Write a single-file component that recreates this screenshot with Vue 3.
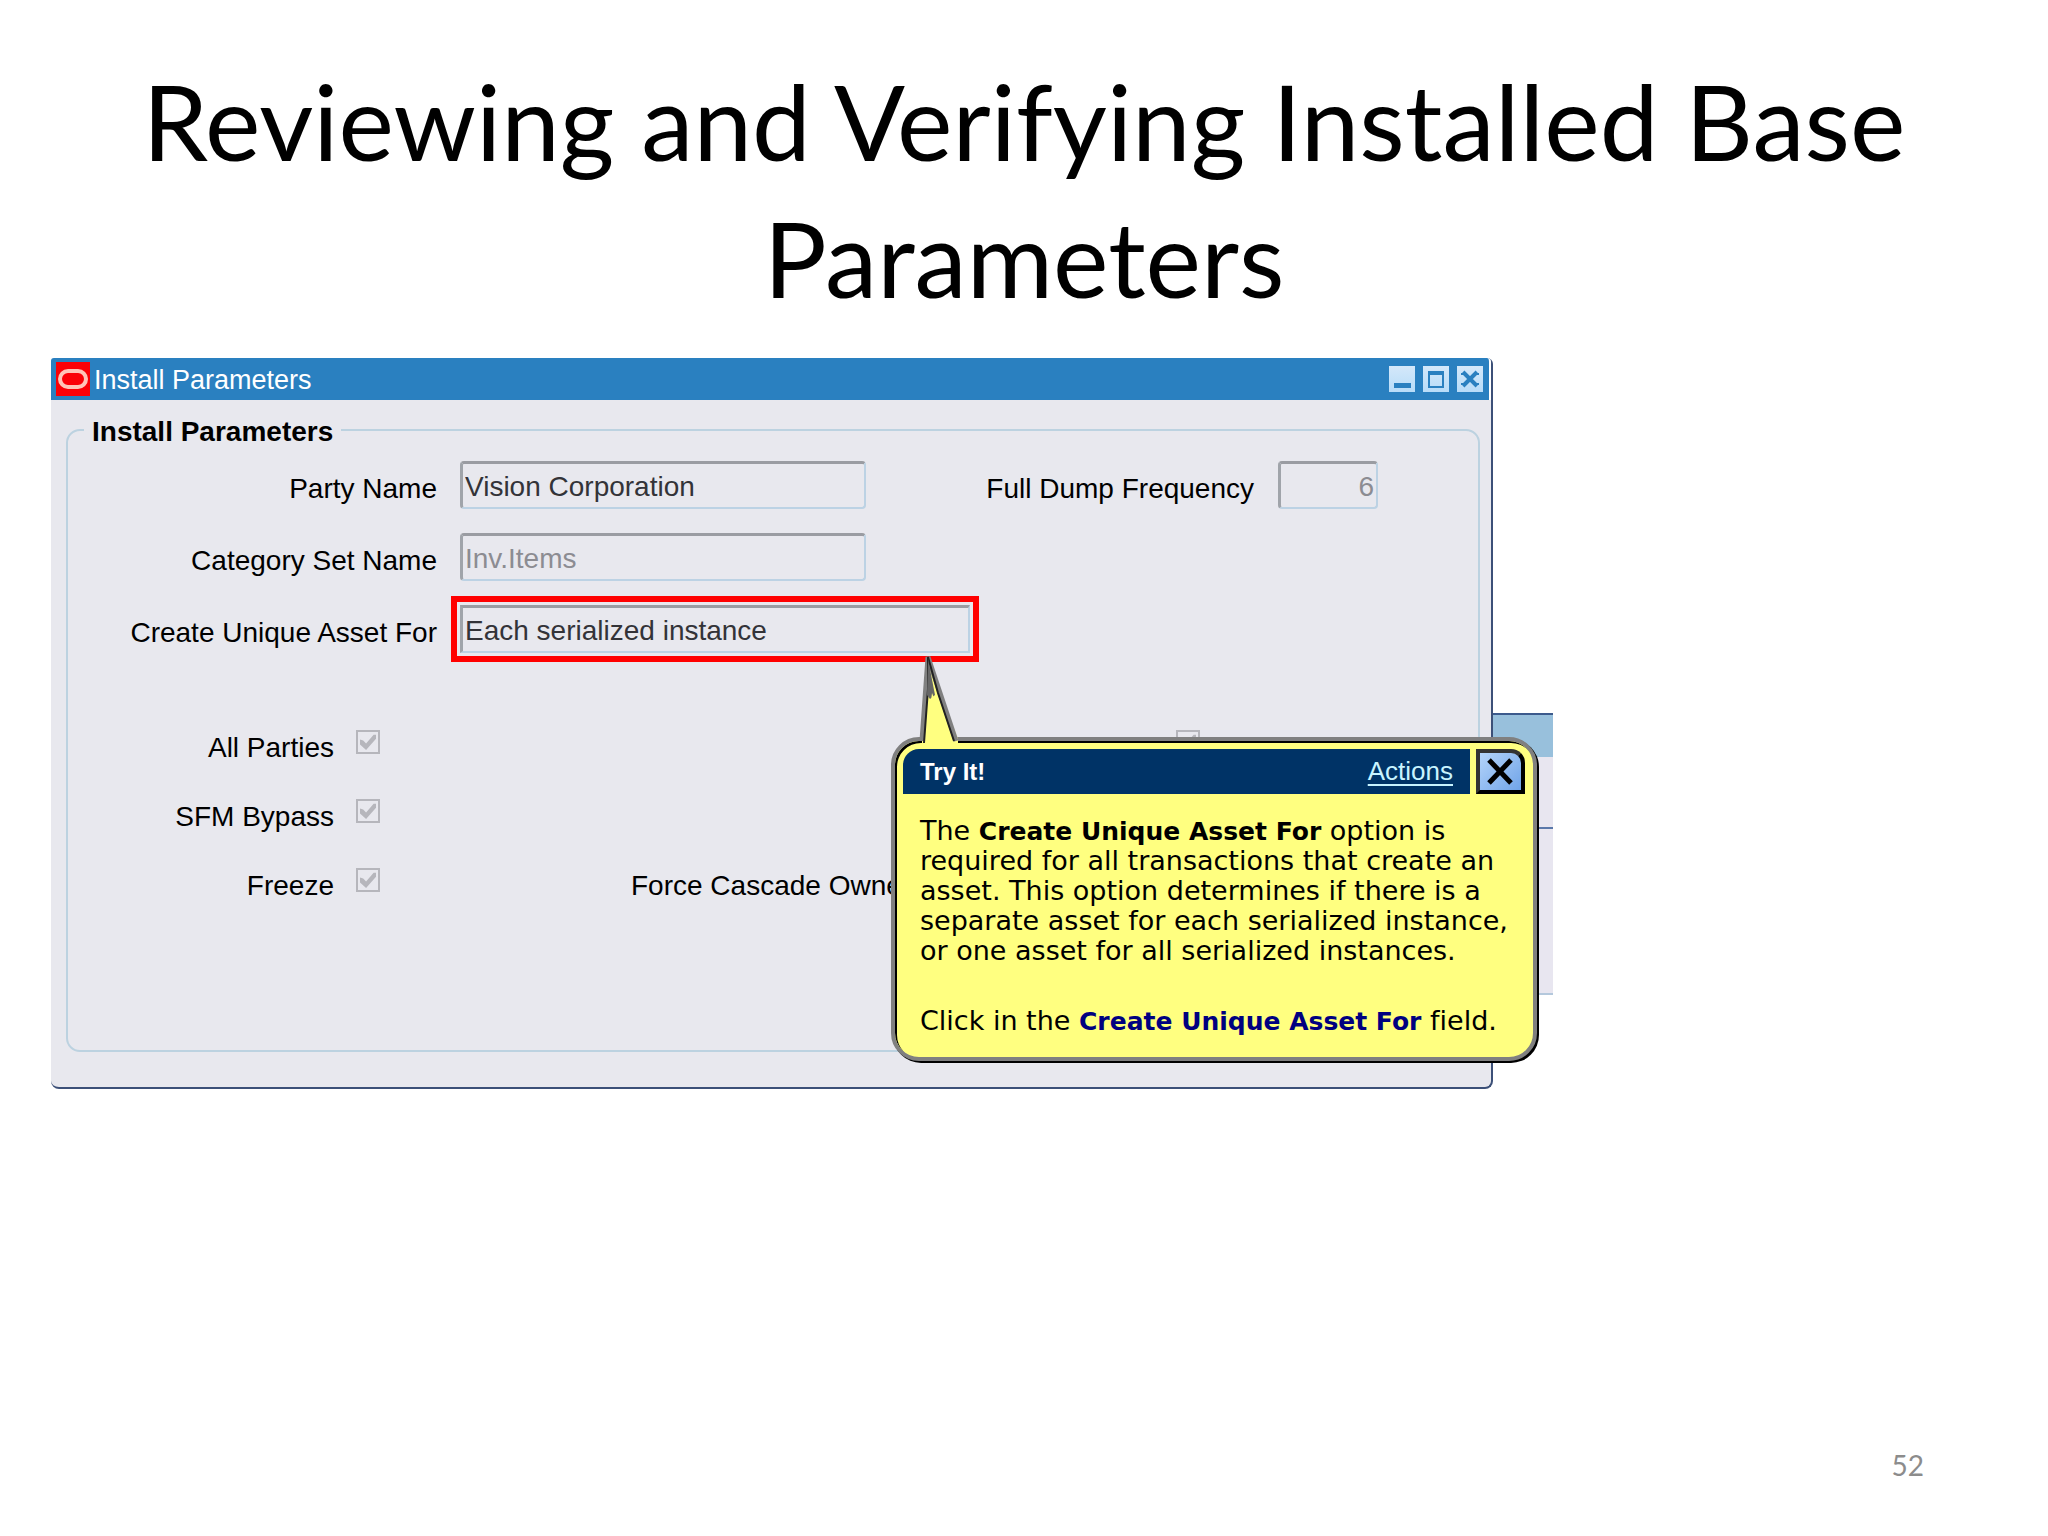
<script setup>
import { ref } from 'vue'

const partyName = ref('Vision Corporation')
const categorySet = ref('Inv.Items')
const uniqueAsset = ref('Each serialized instance')
const dumpFrequency = ref('6')
</script>

<template>
  <main class="slide">
    <h1 class="title">Reviewing and Verifying Installed Base Parameters</h1>

    <div class="stage">
      <div class="back-window" aria-hidden="true">
        <div class="back-bar"></div>
        <div class="back-row"></div>
      </div>

      <section class="window">
        <header class="title-bar">
          <svg class="logo" viewBox="0 0 34 34" aria-hidden="true">
            <rect width="34" height="34" fill="#fb0007" />
            <rect x="4" y="9" width="26" height="16" rx="8" fill="none" stroke="#ffc4b8" stroke-width="4" />
          </svg>
          <span class="window-name">Install Parameters</span>
          <div class="window-buttons">
            <button type="button" aria-label="Minimize">
              <svg viewBox="0 0 26 26"><rect x="5" y="17" width="17" height="5" fill="#2a80c0" /></svg>
            </button>
            <button type="button" aria-label="Maximize">
              <svg viewBox="0 0 26 26">
                <path d="M6 7H20V21H6Z" fill="none" stroke="#2a80c0" stroke-width="2" />
                <rect x="5" y="5" width="16" height="4" fill="#2a80c0" />
              </svg>
            </button>
            <button type="button" aria-label="Close">
              <svg viewBox="0 0 26 26">
                <path d="M6 6L20 20M20 6L6 20" fill="none" stroke="#2a80c0" stroke-width="4" />
                <path d="M4 8H8M18 8H22M4 18H8M18 18H22" fill="none" stroke="#2a80c0" stroke-width="2" />
              </svg>
            </button>
          </div>
        </header>

        <div class="window-body">
          <fieldset class="group">
            <legend>Install Parameters</legend>

            <div class="fields">
              <div class="row">
                <label class="field-label" for="party">Party Name</label>
                <input id="party" v-model="partyName" class="field" type="text" readonly />
                <div class="frequency">
                  <label for="frequency">Full Dump Frequency</label>
                  <input id="frequency" v-model="dumpFrequency" class="field number dim" type="text" readonly />
                </div>
              </div>
              <div class="row">
                <label class="field-label" for="category">Category Set Name</label>
                <input id="category" v-model="categorySet" class="field dim" type="text" readonly />
              </div>
              <div class="row">
                <label class="field-label" for="asset">Create Unique Asset For</label>
                <input id="asset" v-model="uniqueAsset" class="field wide highlighted" type="text" readonly />
              </div>
            </div>

            <div class="checks">
              <div class="check-row">
                <label class="check-label" for="all-parties">All Parties</label>
                <input id="all-parties" type="checkbox" checked disabled />
                <input class="far-check" type="checkbox" checked disabled />
              </div>
              <div class="check-row">
                <label class="check-label" for="sfm">SFM Bypass</label>
                <input id="sfm" type="checkbox" checked disabled />
              </div>
              <div class="check-row">
                <label class="check-label" for="freeze">Freeze</label>
                <input id="freeze" type="checkbox" checked disabled />
                <span class="cascade">Force Cascade Owne</span>
              </div>
            </div>
          </fieldset>
        </div>
      </section>

      <aside class="bubble">
        <svg class="tail" viewBox="0 0 44 92" aria-hidden="true">
          <path d="M6 92V84L11 2L42 84V92Z" fill="#ffff80" />
          <path d="M6 86L10 30L12 2L40 86" fill="none" stroke="#808080" stroke-width="5" />
          <path d="M8 88L12 34V2L22 38L38 86" fill="none" stroke="#222" stroke-width="2" />
          <path d="M12 4L19 40L14 44L11 40Z" fill="#666" />
          <path d="M10 92V84L16 38L36 86V92Z" fill="#ffff80" />
        </svg>
        <header class="bubble-head">
          <div class="bubble-bar">
            <strong>Try It!</strong>
            <a href="#">Actions</a>
          </div>
          <button class="bubble-close" type="button" aria-label="Close tip">
            <svg viewBox="0 0 30 30"><path d="M4 3L26 26M26 3L4 26" fill="none" stroke="#000" stroke-width="5" /></svg>
          </button>
        </header>
        <div class="bubble-text">
          <p>
            The <b>Create Unique Asset For</b> option is<br />
            required for all transactions that create an<br />
            asset. This option determines if there is a<br />
            separate asset for each serialized instance,<br />
            or one asset for all serialized instances.
          </p>
          <p>Click in the <b class="target">Create Unique Asset For</b> field.</p>
        </div>
      </aside>
    </div>

    <footer class="page-number">52</footer>
  </main>
</template>

<style>
body {
  margin: 0;
  background: #fff;
}
</style>

<style scoped>
.slide {
  box-sizing: border-box;
  display: flex;
  flex-direction: column;
  min-height: 100vh;
  padding: 52px 124px 54px 51px;
  font-family: "Liberation Sans", Arial, sans-serif;
  font-size: 28px;
  color: #000;
}
.title {
  margin: 0 0 32px 73px;
  font: 400 105px/137px Lato, Calibri, sans-serif;
  text-align: center;
}
.stage {
  position: relative;
  margin-right: 371px;
}
.back-window {
  position: absolute;
  top: 355px;
  right: 0;
  width: 80px;
  background: #e8e6f0;
  border-bottom: 2px solid #b4c8dc;
}
.back-bar {
  height: 42px;
  background: #98c0dc;
  border-top: 2px solid #3c5a8c;
}
.back-row {
  height: 70px;
  margin-bottom: 164px;
  border-bottom: 2px solid #5a78aa;
}
.window {
  position: relative;
  margin-right: 60px;
  background: #e8e8ee;
  border-right: 2px solid #3c5078;
  border-bottom: 2px solid #3c5078;
  border-radius: 3px 6px 8px 8px;
}
.title-bar {
  display: flex;
  align-items: center;
  height: 42px;
  padding: 0 6px 0 5px;
  background: #2a80c0;
  border-right: 2px solid #fff;
  border-radius: 3px 4px 0 0;
  color: #fff;
}
.logo {
  width: 34px;
  height: 34px;
}
.window-name {
  padding: 3px 0 0 4px;
  font-size: 27px;
}
.window-buttons {
  display: flex;
  gap: 8px;
  margin-left: auto;
}
.window-buttons button {
  width: 26px;
  height: 26px;
  padding: 0;
  border: 0;
  background: linear-gradient(#d4e8fa, #b8dcf8);
}
.window-buttons svg {
  display: block;
}
.window-body {
  padding: 14px 11px 35px 15px;
}
.group {
  min-width: 0;
  margin: 0;
  padding: 15px 0 158px;
  border: 2px solid #bcd2e0;
  border-radius: 14px;
}
legend {
  box-sizing: border-box;
  height: 32px;
  margin-left: 16px;
  padding: 2px 8px 0;
  font-weight: 700;
  line-height: 32px;
}
.fields {
  display: flex;
  flex-direction: column;
  gap: 24px;
}
.row {
  display: flex;
  align-items: center;
  height: 48px;
}
.row label {
  padding-top: 8px;
}
.field-label {
  width: 369px;
  margin-right: 23px;
  text-align: right;
}
.field {
  box-sizing: border-box;
  width: 406px;
  height: 48px;
  padding: 2px 2px 0;
  background: transparent;
  border: 2px solid #bcd2e4;
  border-top: 3px solid #9a9ca2;
  border-left: 3px solid #a0a4aa;
  border-radius: 4px;
  color: #333338;
  font: inherit;
}
.wide {
  width: 510px;
}
.dim {
  color: #8c8c92;
}
.highlighted {
  outline: 6px solid #f00;
  outline-offset: 3px;
  border-radius: 0;
}
.frequency {
  display: flex;
  align-items: center;
  gap: 24px;
  margin-left: auto;
  margin-right: 100px;
}
.number {
  width: 100px;
  text-align: right;
}
.checks {
  display: flex;
  flex-direction: column;
  gap: 45px;
  margin-top: 77px;
}
.check-row {
  display: flex;
  align-items: center;
  height: 24px;
}
.check-label {
  width: 266px;
  margin-right: 22px;
  padding-top: 11px;
  text-align: right;
}
input[type="checkbox"] {
  appearance: none;
  box-sizing: border-box;
  width: 24px;
  height: 24px;
  margin: 0;
  border: 2px solid #b6b6bc;
}
input[type="checkbox"]::before {
  content: "";
  display: block;
  width: 16px;
  height: 16px;
  margin: 2px;
  background: #b6b6bc;
  clip-path: polygon(0 35%, 20% 40%, 38% 60%, 85% 5%, 100% 5%, 100% 30%, 38% 100%, 0 65%);
}
input.far-check {
  margin-left: 796px;
}
.cascade {
  padding-top: 11px;
  margin-left: 251px;
  white-space: nowrap;
}
.bubble {
  position: absolute;
  top: 379px;
  left: 840px;
  box-sizing: border-box;
  width: 646px;
  padding: 8px;
  background: #ffff80;
  border: 4px solid #808080;
  border-radius: 28px;
  box-shadow: inset 2px 2px 0 #000, 2px 2px 0 #000;
}
.tail {
  position: absolute;
  top: -86px;
  left: 21px;
  width: 44px;
  height: 92px;
}
.bubble-head {
  display: flex;
  gap: 6px;
}
.bubble-bar {
  display: flex;
  flex: 1;
  align-items: center;
  justify-content: space-between;
  height: 45px;
  padding: 0 17px;
  background: #003366;
  border-radius: 16px 0 0 0;
  color: #fff;
  font-size: 26px;
}
.bubble-bar strong {
  font-size: 24px;
}
.bubble-bar a {
  color: #c8f4ff;
  text-underline-offset: 4px;
}
.bubble-close {
  width: 49px;
  height: 45px;
  padding: 3px 5px;
  background: linear-gradient(135deg, #b4d4fa, #70a4e8);
  border: 4px solid #000;
  border-color: #333 #000 #000 #333;
  border-radius: 0 14px 0 0;
}
.bubble-close svg {
  display: block;
  width: 30px;
  height: 30px;
}
.bubble-text {
  padding: 22px 0 13px 17px;
  font: 27px/30px "DejaVu Sans", Verdana, sans-serif;
  font-variant-ligatures: none;
  white-space: nowrap;
}
.bubble-text b {
  font-size: 25px;
  line-height: 1;
}
.bubble-text p {
  margin: 0;
}
.bubble-text p + p {
  margin-top: 40px;
}
.target {
  color: #000080;
}
.page-number {
  margin-top: auto;
  color: #8c8c8c;
  font: 28px/34px Lato, Calibri, sans-serif;
  text-align: right;
}
</style>
